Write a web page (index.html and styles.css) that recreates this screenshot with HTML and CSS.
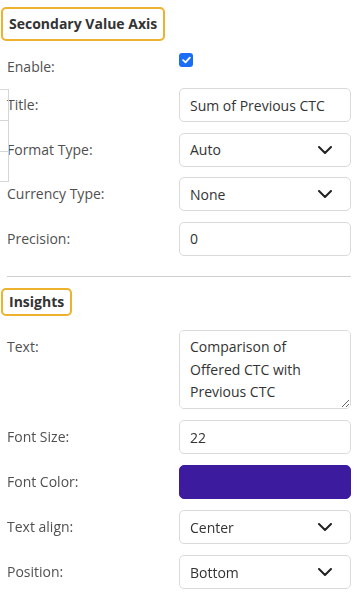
FILE: index.html
```html
<!DOCTYPE html>
<html lang="en">
<head>
    <meta charset="UTF-8">
    <meta name="viewport" content="width=device-width, initial-scale=1.0">
    <title>Chart Properties</title>
    <link rel="stylesheet" href="styles.css">
</head>
<body>
    <div class="panel">
        <div class="side-tabs">
            <div></div>
            <div></div>
            <div></div>
        </div>

        <div class="section-title first">Secondary Value Axis</div>

        <div class="row enable-row">
            <label class="label">Enable:</label>
            <div class="field">
                <span class="checkbox">
                    <svg width="9" height="8" viewBox="0 0 9 8"><path d="M1.2 4.2 L3.5 6.3 L7.8 1.6" fill="none" stroke="#fff" stroke-width="1.8" stroke-linecap="round" stroke-linejoin="round"/></svg>
                </span>
            </div>
        </div>

        <div class="row">
            <label class="label">Title:</label>
            <div class="field"><input class="input" type="text" value="Sum of Previous CTC"></div>
        </div>

        <div class="row">
            <label class="label">Format Type:</label>
            <div class="field"><div class="select">Auto<svg class="chevron" width="14" height="8" viewBox="0 0 14 8"><path d="M1 1 L7 7 L13 1" fill="none" stroke="#222" stroke-width="2" stroke-linecap="round" stroke-linejoin="round"/></svg></div></div>
        </div>

        <div class="row">
            <label class="label">Currency Type:</label>
            <div class="field"><div class="select">None<svg class="chevron" width="14" height="8" viewBox="0 0 14 8"><path d="M1 1 L7 7 L13 1" fill="none" stroke="#222" stroke-width="2" stroke-linecap="round" stroke-linejoin="round"/></svg></div></div>
        </div>

        <div class="row">
            <label class="label">Precision:</label>
            <div class="field"><input class="input" type="text" value="0"></div>
        </div>

        <hr class="divider">

        <div class="section-title">Insights</div>

        <div class="row after-title">
            <label class="label">Text:</label>
            <div class="field"><textarea class="textarea">Comparison of Offered CTC with Previous CTC</textarea></div>
        </div>

        <div class="row loose">
            <label class="label">Font Size:</label>
            <div class="field"><input class="input" type="text" value="22"></div>
        </div>

        <div class="row loose">
            <label class="label">Font Color:</label>
            <div class="field"><div class="color-swatch"></div></div>
        </div>

        <div class="row loose">
            <label class="label">Text align:</label>
            <div class="field"><div class="select">Center<svg class="chevron" width="14" height="8" viewBox="0 0 14 8"><path d="M1 1 L7 7 L13 1" fill="none" stroke="#222" stroke-width="2" stroke-linecap="round" stroke-linejoin="round"/></svg></div></div>
        </div>

        <div class="row loose">
            <label class="label">Position:</label>
            <div class="field"><div class="select">Bottom<svg class="chevron" width="14" height="8" viewBox="0 0 14 8"><path d="M1 1 L7 7 L13 1" fill="none" stroke="#222" stroke-width="2" stroke-linecap="round" stroke-linejoin="round"/></svg></div></div>
        </div>
    </div>
</body>
</html>
```

FILE: styles.css
```css
* {
    margin: 0;
    padding: 0;
    box-sizing: border-box;
}

body {
    font-family: 'Open Sans', 'Noto Sans', sans-serif;
    font-size: 14px;
    color: #333;
    background-color: #fff;
}

.panel {
    position: relative;
    padding: 7px 8px 0 7px;
}

/* partially hidden tab strip at the left edge */
.side-tabs {
    position: absolute;
    left: 0;
    top: 89px;
    width: 9px;
    border-right: 1px solid #d6d6d6;
}

.side-tabs div {
    height: 31px;
    border-top: 1px solid #d6d6d6;
}

.side-tabs div:last-child {
    border-bottom: 1px solid #d6d6d6;
}

.section-title {
    display: inline-block;
    margin-left: -6px;
    padding: 0 6px;
    height: 28px;
    line-height: 24px;
    border: 2px solid #eeb22e;
    border-radius: 5px;
    font-weight: 700;
    font-size: 14px;
    color: #333;
}

.section-title.first {
    height: 34px;
    line-height: 30px;
}

.row {
    display: flex;
    align-items: flex-start;
    margin-top: 10.5px;
}

.row.loose {
    margin-top: 11px;
}

.row.after-title {
    margin-top: 14px;
}

.label {
    width: 172px;
    flex-shrink: 0;
    line-height: 34px;
    color: #505050;
    font-size: 14px;
}

.field {
    flex: 1;
}

.enable-row {
    margin-top: 9px;
    height: 38px;
}

.enable-row + .row {
    margin-top: 0;
}

.checkbox {
    display: flex;
    align-items: center;
    justify-content: center;
    width: 14px;
    height: 14px;
    margin-top: 3px;
    background-color: #1a6ef5;
    border-radius: 3px;
}

.input,
.select,
.textarea,
.color-swatch {
    display: block;
    width: 100%;
    height: 34px;
    border: 1px solid #dadada;
    border-radius: 5px;
    font-family: inherit;
    font-size: 14px;
    color: #333;
    background-color: #fff;
}

.input {
    padding: 0 10px;
}

.input:focus,
.textarea:focus {
    outline: none;
}

.select {
    display: flex;
    justify-content: space-between;
    align-items: center;
    padding: 0 18px 0 10px;
}

.textarea {
    height: 79px;
    padding: 5px 10px;
    line-height: 22.5px;
    resize: vertical;
}

.color-swatch {
    background-color: #3d1b9f;
    border-color: #3d1b9f;
}

.divider {
    border: none;
    border-top: 1px solid #cfcfcf;
    margin: 20.5px 0 11px;
}
```
